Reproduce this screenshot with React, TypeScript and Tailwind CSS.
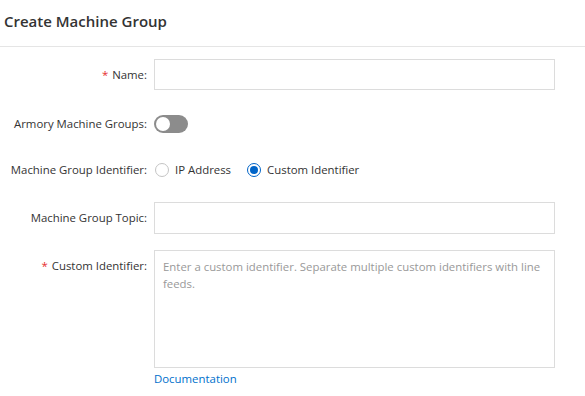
import React from "react";

export default function App() {
  const font = { fontFamily: '"Segoe UI", "Open Sans", "Noto Sans", sans-serif' };
  return (
    <div className="w-[585px] h-[396px] bg-white text-[#333] overflow-hidden" style={font}>
      <div className="h-[47px] border-b border-[#e5e5e5] flex items-center pl-[4px] pb-[4px]">
        <h1 className="text-[15px] font-semibold text-[#333] leading-none">Create Machine Group</h1>
      </div>
      <div className="flex flex-col pt-[12px] text-[11.4px]">
        <div className="flex items-center h-[31px]">
          <label className="w-[147px] text-right pr-0"><span className="text-[#e62e2e] mr-[4px]">*</span>Name:</label>
          <div className="ml-[7px] w-[401px] h-[31px] border border-[#dcdcdc]" />
        </div>
        <div className="flex items-center h-[18px] mt-[25px]">
          <label className="w-[147px] text-right">Armory Machine Groups:</label>
          <div className="ml-[7px] w-[34px] h-[18px] rounded-full bg-[#8c8c8c] flex items-center pl-[2px]">
            <div className="w-[14px] h-[14px] rounded-full bg-white" />
          </div>
        </div>
        <div className="flex items-center h-[20px] mt-[27px]">
          <label className="w-[147px] text-right">Machine Group Identifier:</label>
          <div className="ml-[8px] flex items-center">
            <span className="w-[14px] h-[14px] rounded-full border border-[#c4c4c4] bg-white" />
            <span className="ml-[6px]">IP Address</span>
            <span className="ml-[16px] w-[14px] h-[14px] rounded-full border border-[#0064c8] bg-white flex items-center justify-center">
              <span className="w-[8px] h-[8px] rounded-full bg-[#0064c8]" />
            </span>
            <span className="ml-[6px]">Custom Identifier</span>
          </div>
        </div>
        <div className="flex items-center h-[32px] mt-[22px]">
          <label className="w-[147px] text-right">Machine Group Topic:</label>
          <div className="ml-[7px] w-[401px] h-[32px] border border-[#dcdcdc]" />
        </div>
        <div className="flex mt-[16px]">
          <label className="w-[147px] text-right pt-[7px]"><span className="text-[#e62e2e] mr-[4px]">*</span>Custom Identifier:</label>
          <div className="ml-[7px] flex flex-col">
            <div className="w-[401px] h-[118px] border border-[#dcdcdc] pl-[8px] pr-[4px] pt-[7px] text-[#999] leading-[17px]">
              Enter a custom identifier. Separate multiple custom identifiers with line feeds.
            </div>
            <a className="text-[#0070cc] mt-[2px] leading-[17px]">Documentation</a>
          </div>
        </div>
      </div>
    </div>
  );
}
